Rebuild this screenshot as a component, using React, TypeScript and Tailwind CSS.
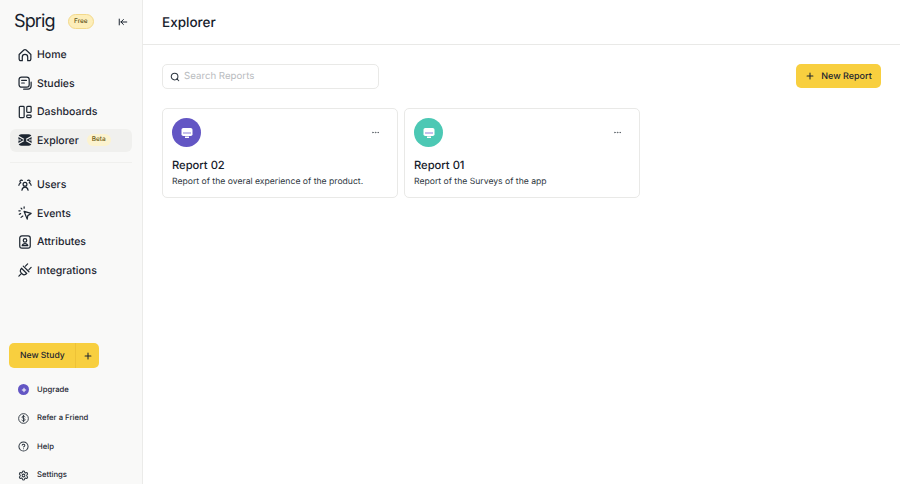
import { ReactNode } from "react";
import { ArrowLeftToLine, Ellipsis, Plus, Search, CircleHelp, Settings } from "lucide-react";

const ico = {
  fill: "none",
  stroke: "currentColor",
  strokeWidth: 1.4,
  strokeLinecap: "round" as const,
  strokeLinejoin: "round" as const,
};

function NavIcon({ children }: { children: ReactNode }) {
  return (
    <svg width="14" height="14" viewBox="0 0 16 16" {...ico}>
      {children}
    </svg>
  );
}

const topNav = [
  {
    name: "Home",
    icon: (
      <NavIcon>
        <path d="M1.300 7.500 6.700 2.300a2 2 0 0 1 2.600 0l5.400 5.200v5.200a1.800 1.800 0 0 1-1.800 1.800h-1.800V10.500a3.100 3.100 0 0 0-6.200 0v4H3.100a1.800 1.800 0 0 1-1.800-1.800z" />
      </NavIcon>
    ),
  },
  {
    name: "Studies",
    icon: (
      <NavIcon>
        <rect x="1.200" y="1.200" width="11.600" height="11.600" rx="2.800" />
        <path d="M4.200 5h5.400M4.200 8h3M15 7v4.500A3.500 3.500 0 0 1 11.500 15H6.500" />
      </NavIcon>
    ),
  },
  {
    name: "Dashboards",
    icon: (
      <NavIcon>
        <rect x="1.500" y="1.500" width="5.500" height="13" rx="1" />
        <rect x="10" y="1.500" width="5" height="7" rx="1" />
        <rect x="10" y="11.500" width="5" height="3" rx="1" />
      </NavIcon>
    ),
  },
  {
    name: "Explorer",
    active: true,
    badge: "Beta",
    icon: (
      <svg width="14" height="14" viewBox="0 0 16 16" fill="none">
        <rect x="0.500" y="1.500" width="15" height="13" rx="3.500" fill="currentColor" />
        <path d="M0 3.500 16 12.500M16 3.500 0 12.500" stroke="#f1f1ef" strokeWidth="1.300" />
        <path d="M0 8h3.500M12.500 8H16" stroke="#f1f1ef" strokeWidth="1.300" />
        <circle cx="8" cy="8" r="1.500" fill="currentColor" />
      </svg>
    ),
  },
];

const lowerNav = [
  {
    name: "Users",
    icon: (
      <NavIcon>
        <circle cx="8" cy="7.200" r="2.200" />
        <path d="M4.500 14c.3-2.300 1.500-3.600 3.500-3.600s3.200 1.300 3.500 3.600M5 2.800a1.600 1.600 0 1 0-1.800 2.600C2 6 1.200 7 1 8.300M11 2.800a1.600 1.600 0 1 1 1.800 2.600C14 6 14.800 7 15 8.300" />
      </NavIcon>
    ),
  },
  {
    name: "Events",
    icon: (
      <NavIcon>
        <path d="M7 6.200 15 8.500 11.200 11l-.7 4-3.500-8.800z" />
        <path d="M1 5.500h1.500M3.500 2.500l.9.9M7 1v1.500M1.500 9.500l1.500-.8M3.500 13l2-1.500" />
      </NavIcon>
    ),
  },
  {
    name: "Attributes",
    icon: (
      <NavIcon>
        <rect x="2" y="1" width="12" height="14" rx="2.500" />
        <circle cx="8" cy="6.200" r="2" />
        <path d="M4.800 12.200c.3-1.600 1.500-2.400 3.200-2.400s2.900.8 3.200 2.400z" />
      </NavIcon>
    ),
  },
  {
    name: "Integrations",
    icon: (
      <NavIcon>
        <path d="M6 3.500 12.500 10M4 6l6 6-1.500 1a3 3 0 0 1-3.500-.4l-1.600-1.600A3 3 0 0 1 3 7.500zM1 15l2.500-2.500M8.500 3.500 11 1M12.500 7.500 15 5" />
      </NavIcon>
    ),
  },
];

const footerNav = [
  {
    name: "Upgrade",
    icon: (
      <span className="flex h-[11px] w-[11px] items-center justify-center rounded-full bg-[#6356c4] text-[#fff]">
        <Plus size={6} strokeWidth={4} />
      </span>
    ),
  },
  {
    name: "Refer a Friend",
    icon: (
      <svg width="11" height="11" viewBox="0 0 12 12" fill="none" stroke="currentColor" strokeWidth="1">
        <circle cx="6" cy="6" r="5.300" />
        <path d="M7.600 4.300C7.300 3.600 6.700 3.300 6 3.300c-.9 0-1.600.5-1.600 1.300C4.400 6.300 7.700 5.500 7.700 7.300c0 .9-.8 1.400-1.700 1.400-.8 0-1.400-.3-1.700-1M6 2.500v7" strokeLinecap="round" />
      </svg>
    ),
  },
  { name: "Help", icon: <CircleHelp size={11} strokeWidth={2.200} /> },
  { name: "Settings", icon: <Settings size={11} strokeWidth={2.200} /> },
];

const reports = [
  { name: "Report 02", text: "Report of the overal experience of the product.", color: "bg-[#6356c4]" },
  { name: "Report 01", text: "Report of the Surveys of the app", color: "bg-[#4cc8b4]" },
];

function NavRow({ item }: { item: { name: string; icon: ReactNode; active?: boolean; badge?: string } }) {
  return (
    <div
      className={`flex h-[23.500px] items-center gap-[5px] rounded-md pl-[8px] ${item.active ? "bg-[#f0f0ee]" : ""}`}
    >
      <span className="flex w-[14px] justify-center text-[#1c2530]">{item.icon}</span>
      <span className="pt-[1px] text-[10.500px] font-medium text-[#1c2530]">{item.name}</span>
      {item.badge && (
        <span className="ml-[3px] rounded-full bg-[#fcf3cf] px-[5px] py-[1px] text-[6.500px] font-medium text-[#6b5a12]">
          {item.badge}
        </span>
      )}
    </div>
  );
}

function ScreenIcon() {
  return (
    <svg width="12" height="12" viewBox="0 0 12 12" fill="none">
      <rect x="0.500" y="1" width="11" height="8" rx="1.800" fill="#fff" />
      <rect x="2" y="5.500" width="8" height="1" fill="currentColor" />
      <rect x="4" y="9.500" width="4" height="1.500" fill="#fff" />
    </svg>
  );
}

export default function App() {
  return (
    <div className="flex h-[484px] w-[900px] overflow-hidden bg-white font-['Inter',sans-serif] text-[#1c2530] [text-rendering:geometricPrecision]">
      {/* Sidebar */}
      <aside className="flex w-[143px] shrink-0 flex-col border-r border-[#ebebe9] bg-[#f9f9f8] px-[10px]">
        <div className="flex h-[43px] shrink-0 items-center pl-[4px]">
          <span className="w-[54px] text-[18px] leading-none tracking-[-0.9px] text-[#16202b]">Sprig</span>
          <span className="rounded-full border border-[#f3d98a] bg-[#fdeeb9] px-[5px] py-[2px] text-[6.500px] font-medium text-[#5d5320]">
            Free
          </span>
          <ArrowLeftToLine size={10} strokeWidth={2.400} className="ml-[24px]" />
        </div>

        <nav className="flex flex-col gap-[5px]">
          {topNav.map((item) => (
            <NavRow key={item.name} item={item} />
          ))}
        </nav>
        <div className="my-[10px] h-px bg-[#f0f0ee]" />
        <nav className="flex flex-col gap-[5px]">
          {lowerNav.map((item) => (
            <NavRow key={item.name} item={item} />
          ))}
        </nav>

        <div className="mt-auto mb-[-1px]">
          <div className="flex h-[25px] w-[90px] -translate-x-px items-center rounded-[5px] bg-[#f8cf3f] text-[#1c2530]">
            <span className="flex-1 pl-[11px] pt-[2px] text-[8.600px] font-medium">New Study</span>
            <span className="flex h-full w-[24px] items-center justify-center border-l border-[#eec237]">
              <Plus size={10} strokeWidth={2.500} />
            </span>
          </div>
          <div className="mt-[12px] flex flex-col gap-[9px]">
            {footerNav.map((item) => (
              <div key={item.name} className="flex h-[19.500px] items-center gap-[8px] pl-[8px]">
                <span className="flex w-[11px] justify-center text-[#2d3640]">{item.icon}</span>
                <span className="text-[7.700px] font-medium text-[#1c2530]">{item.name}</span>
              </div>
            ))}
          </div>
        </div>
      </aside>

      {/* Main */}
      <main className="flex-1">
        <header className="flex h-[45px] items-center border-b border-[#e9e9e7] pl-[19px] pt-[2px]">
          <h1 className="text-[13.500px] font-medium text-[#16202b]">Explorer</h1>
        </header>
        <div className="px-[19px] pt-[19px]">
          <div className="flex items-start justify-between">
            <div className="flex h-[25px] w-[217px] items-center gap-[4px] rounded-[5px] border border-[#e9e9e7] pl-[7px]">
              <Search size={10} strokeWidth={2.500} className="text-[#2d3640]" />
              <span className="pt-[1px] text-[9.700px] text-[#b9bcc0]">Search Reports</span>
            </div>
            <div className="flex h-[24px] w-[85px] items-center justify-center gap-[6px] rounded-[5px] bg-[#f8cf3f]">
              <Plus size={10} strokeWidth={2.500} />
              <span className="pt-[1px] text-[9px] font-medium">New Report</span>
            </div>
          </div>
          <div className="mt-[19px] flex gap-[6px]">
            {reports.map((r) => (
              <div key={r.name} className="h-[90px] w-[236px] rounded-[5px] border border-[#e9e9e7] px-[9px] pt-[9px]">
                <div className="flex items-center justify-between">
                  <span className={`flex h-[29px] w-[29px] items-center justify-center rounded-full text-[#8b80d8] ${r.color}`}>
                    <ScreenIcon />
                  </span>
                  <Ellipsis size={9} className="mr-[8px] text-[#555c63]" />
                </div>
                <div className="mt-[11px] text-[11.200px] font-medium leading-[15px] text-[#16202b]">{r.name}</div>
                <div className="mt-[2px] text-[8.650px] leading-[14px] text-[#2d3640]">{r.text}</div>
              </div>
            ))}
          </div>
        </div>
      </main>
    </div>
  );
}
